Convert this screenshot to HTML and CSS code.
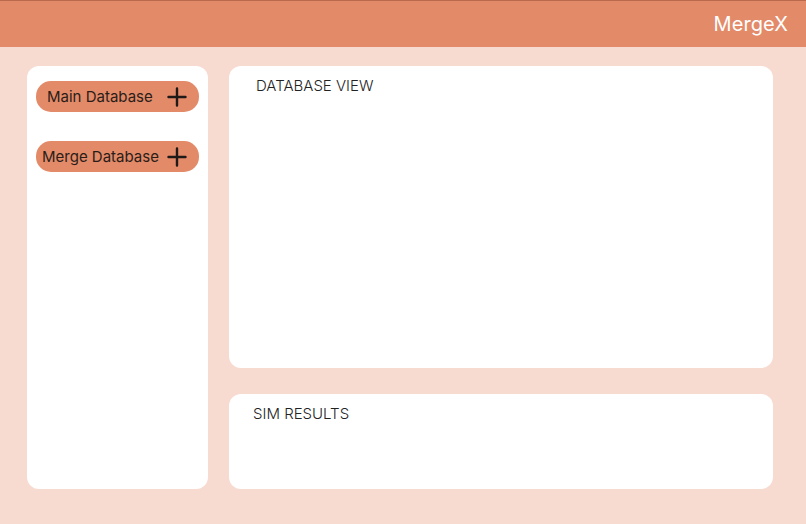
FILE: index.html
```html
<!DOCTYPE html>
<html>
<head>
<meta charset="utf-8">
<link rel="stylesheet" href="styles.css">
</head>
<body>
<header class="topbar"><span class="brand">MergeX</span></header>
<main class="content">
  <aside class="sidebar">
    <button class="db-btn main"><span>Main Database</span>
      <svg class="plus" viewBox="0 0 20 20"><path d="M10 1.5V18.5M1.5 10H18.5" stroke="#1f1a18" stroke-width="2.4" stroke-linecap="round"/></svg>
    </button>
    <button class="db-btn merge"><span>Merge Database</span>
      <svg class="plus" viewBox="0 0 20 20"><path d="M10 1.5V18.5M1.5 10H18.5" stroke="#1f1a18" stroke-width="2.4" stroke-linecap="round"/></svg>
    </button>
  </aside>
  <section class="panels">
    <div class="panel db-view"><h2>DATABASE VIEW</h2></div>
    <div class="panel sim"><h2>SIM RESULTS</h2></div>
  </section>
</main>
</body>
</html>
```
FILE: styles.css
```css
* { box-sizing: border-box; }
html, body { margin: 0; padding: 0; }
body {
  width: 806px;
  height: 524px;
  background: #f8dbd0;
  font-family: Inter, "Noto Sans", sans-serif;
  overflow: hidden;
}
.topbar {
  height: 47px;
  background: #e38a69;
  border-top: 1px solid #b8694e;
  display: flex;
  align-items: center;
  justify-content: flex-end;
  padding-right: 18px;
}
.brand {
  color: #fff;
  font-size: 20px;
  font-weight: 400;
  letter-spacing: 0.1px;
}
.content {
  display: grid;
  grid-template-columns: 181px 1fr;
  gap: 21px;
  padding: 19px 33px 0 27px;
}
.sidebar {
  background: #fff;
  border-radius: 12px;
  height: 423px;
  padding: 15px 9px;
  display: flex;
  flex-direction: column;
  gap: 29px;
}
.db-btn {
  width: 163px;
  height: 31px;
  border: none;
  border-radius: 15px;
  background: #e38a69;
  display: flex;
  align-items: center;
  justify-content: space-between;
  padding: 0 12px 0 11px;
  font-family: Inter, "Noto Sans", sans-serif;
  font-size: 15px;
  color: #2a1d18;
}
.db-btn.merge { padding-left: 6px; }
.plus { width: 20px; height: 20px; }
.panels {
  display: flex;
  flex-direction: column;
  gap: 26px;
}
.panel {
  background: #fff;
  border-radius: 12px;
}
.panel h2 {
  margin: 0;
  font-size: 15px;
  line-height: 18px;
  font-weight: 300;
  color: #222;
}
.db-view {
  height: 302px;
  padding: 11px 27px;
}
.sim {
  height: 95px;
  padding: 11px 24px;
}
```
